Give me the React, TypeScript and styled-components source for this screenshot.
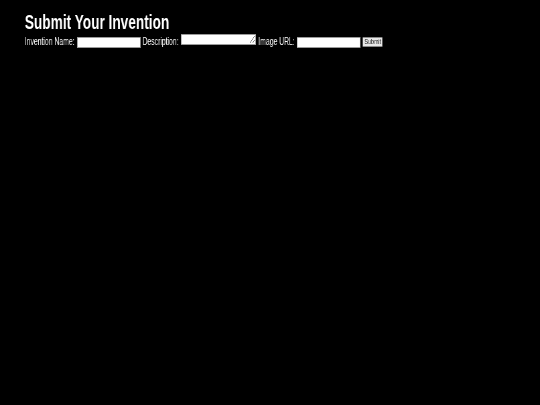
import styled, { createGlobalStyle } from 'styled-components';

const GlobalStyle = createGlobalStyle`
  html,
  body {
    margin: 0;
    padding: 0;
    background-color: #000;
    overflow: hidden;
  }

  body {
    font-family: 'Liberation Sans', Arial, sans-serif;
    color: #fff;
  }
`;

// the reference is drawn narrow, so the whole page is squeezed sideways
const Page = styled.main`
  width: 806px;
  height: 405px;
  padding: 11px 0 0 37px;
  box-sizing: border-box;
  transform: scaleX(0.67);
  transform-origin: 0 0;
  will-change: transform;
`;

const Title = styled.h1`
  margin: 0;
  font-size: 20.4px;
  line-height: 23px;
  font-weight: 700;
`;

const Form = styled.form`
  display: flex;
  align-items: flex-start;
  margin: 0;
`;

const Label = styled.label`
  margin: 1.5px 3.5px 0 0;
  font-size: 10.2px;
  line-height: 12px;
  white-space: nowrap;
`;

const Field = styled.input`
  box-sizing: border-box;
  width: 95px;
  height: 10.5px;
  margin: 3px 3px 0 0;
  padding: 0;
  border: 1px solid #9a9a9a;
  border-radius: 0;
  background-color: #fff;
  font-size: 8px;
`;

const Area = styled.textarea`
  box-sizing: border-box;
  width: 112px;
  height: 10.5px;
  margin: 0 3.5px 0 0;
  padding: 0;
  border: 1px solid #9a9a9a;
  border-radius: 0;
  background-color: #fff;
  font-size: 8px;
`;

const Button = styled.button`
  box-sizing: border-box;
  width: 30px;
  height: 10px;
  margin: 3px 0 0 0;
  padding: 0;
  border: 1px solid #8a8a8a;
  border-radius: 1px;
  background-color: #e8e8e8;
  color: #222;
  font-family: 'Liberation Sans', Arial, sans-serif;
  font-size: 8px;
  line-height: 8px;
`;

function App() {
  return (
    <>
      <GlobalStyle />
      <Page>
        <Title>Submit Your Invention</Title>
        <Form onSubmit={(e) => e.preventDefault()}>
          <Label htmlFor="name">Invention Name:</Label>
          <Field id="name" type="text" />
          <Label htmlFor="description">Description:</Label>
          <Area id="description" />
          <Label htmlFor="image">Image URL:</Label>
          <Field id="image" type="text" />
          <Button type="submit">Submit</Button>
        </Form>
      </Page>
    </>
  );
}

export default App;
